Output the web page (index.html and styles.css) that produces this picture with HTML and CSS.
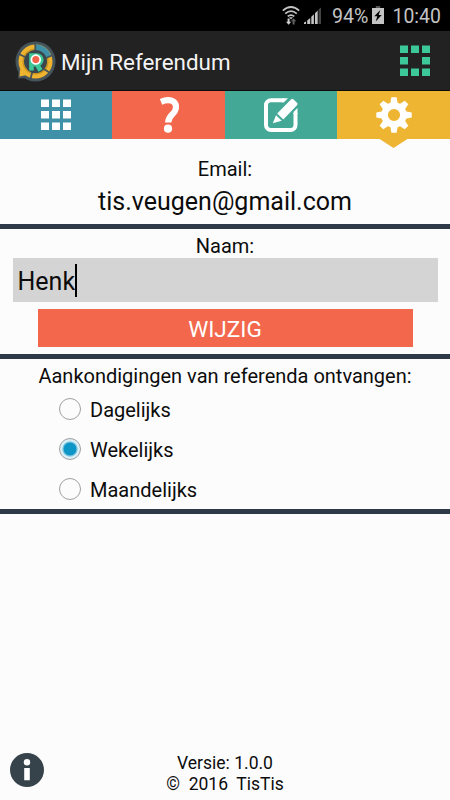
FILE: index.html
```html
<!DOCTYPE html>
<html lang="nl">
<head>
<meta charset="utf-8">
<title>Mijn Referendum</title>
<link rel="stylesheet" href="styles.css">
</head>
<body>
<div class="screen">
  <div class="status">
    <svg class="wifi" width="18" height="20" viewBox="0 0 18 20" fill="none" stroke="#c4c4c4" stroke-width="1.7">
      <path d="M.8 4.6Q9-2.6 17.2 4.6M3.2 7.6Q9 2.6 14.8 7.6M5.7 10.4Q9 7.7 12.3 10.4"/>
      <path d="M7 11.2h4L9 13.4z" fill="#c4c4c4" stroke="none"/>
      <path d="M5.6 12.5h2v3.2h1.6l-2.6 3-2.600-3h1.600z" fill="#d0d0d0" stroke="none"/>
      <path d="M10.6 18.5h2v-3.2h1.6l-2.6-3-2.6 3h1.6z" fill="#606060" stroke="none"/>
    </svg>
    <svg class="signal" width="18" height="18" viewBox="0 0 18 18">
      <path d="M0 17v-1.500l2-1V17zM3.200 17v-3.500l3-2.500v6zM7.300 17V9.800l2.600-2.600V17zM11 17V6.200l2.700-2.600V17z" fill="#c4c4c4"/>
      <path d="M14.500 17V2.600L17 .5V17z" fill="#444"/>
    </svg>
    <span class="percent">94%</span>
    <svg class="battery" width="12" height="18" viewBox="0 0 12 18">
      <path d="M3.800 0h4.400v2H3.800z" fill="#555"/>
      <path d="M0 2h12v16H0z" fill="#c4c4c4"/>
      <path d="M8.300 4L2.300 10.300h3L3.700 15.500l6-6.500h-3z" fill="#000"/>
    </svg>
    <span class="clock">10:40</span>
  </div>

  <header class="header">
    <svg class="logo" width="41" height="41" viewBox="0 0 41 41">
      <path d="M4 28L3 37.500 13 37z" fill="#46545b"/>
      <circle cx="20.500" cy="20.500" r="20" fill="#46545b"/>
      <circle cx="20.500" cy="20.500" r="14" fill="none" stroke="#eeb42f" stroke-width="6"/>
      <circle cx="20.500" cy="20.500" r="12.300" fill="none" stroke="#c99420" stroke-width="1.500"/>
      <path d="M20.500 3.500A17 17 0 0 1 36.500 15L31 17A11 11 0 0 0 20.500 9.500z" fill="#3f91a8"/>
      <path d="M5 28L4.500 35.500 12 34z" fill="#eeb42f"/>
      <path d="M20.300 2v9M31 17l7-3M10 16L3 12.500M17.500 30l-2 8M29 28l6 4" stroke="#46545b" stroke-width="1.800"/>
      <circle cx="20.500" cy="20.500" r="11.500" fill="#39464d"/>
      <path d="M16.500 29.500V14.500h5.500a4.200 4.200 0 0 1 0 8.600h-3M21.500 22.500l4 7" fill="none" stroke="#3cc898" stroke-width="4.600"/>
      <circle cx="20.800" cy="18.600" r="4.400" fill="#f0624a" stroke="#fff" stroke-width="1.700"/>
    </svg>
    <h1 class="title">Mijn Referendum</h1>
    <svg class="frame" width="30" height="32" viewBox="0 0 30 32" fill="#3cc898">
      <path d="M0 .5h8v7.500H0zM11 .5h8v7.500h-8zM22 .5h8v7.500h-8zM0 12h8v7.500H0zM22 12h8v7.500h-8zM0 23.500h8V31H0zM11 23.500h8V31h-8zM22 23.500h8V31h-8z"/>
    </svg>
  </header>

  <nav class="tabs">
    <div class="tab tab-blue">
      <svg width="30" height="32" viewBox="0 0 30 32" fill="#fff">
        <path d="M0 .5h8v7.500H0zM11 .5h8v7.500h-8zM22 .5h8v7.500h-8zM0 12h8v7.500H0zM11 12h8v7.500h-8zM22 12h8v7.500h-8zM0 23.500h8V31H0zM11 23.500h8V31h-8zM22 23.500h8V31h-8z"/>
      </svg>
    </div>
    <div class="tab tab-red">
      <svg width="20" height="36" viewBox="0 0 20 36">
        <path d="M2 4.800C9 1.800 17 2.600 17 10.400C17 17.500 9.200 17 9.200 25.500" fill="none" stroke="#fff" stroke-width="6.200"/>
        <circle cx="9" cy="31.700" r="4.100" fill="#fff"/>
      </svg>
    </div>
    <div class="tab tab-green">
      <svg width="34" height="34" viewBox="0 0 34 34">
        <path d="M20 2.300H7a5 5 0 0 0-5 5V27a5 5 0 0 0 5 5h19.500a5 5 0 0 0 5-5V15" fill="none" stroke="#fff" stroke-width="4"/>
        <path d="M13.200 15.500L27.200 1.200Q28.300.2 29.300 1.200L33.200 5Q34 6 33.200 7L19.300 21.400zM12 17.200l5.800 5.600L8.800 25.300z" fill="#fff"/>
        <path d="M18.500.300H24L20 4.300H17.500zM29.500 14l4-4v6h-4z" fill="#fff"/>
      </svg>
    </div>
    <div class="tab tab-yellow">
      <svg width="36" height="36" viewBox="-18 -18 36 36" fill="#fff">
        <defs><path id="tooth" d="M-4-10L-2.600-17.700H2.600L4-10z"/></defs>
        <use href="#tooth"/><use href="#tooth" transform="rotate(45)"/><use href="#tooth" transform="rotate(90)"/><use href="#tooth" transform="rotate(135)"/>
        <use href="#tooth" transform="rotate(180)"/><use href="#tooth" transform="rotate(225)"/><use href="#tooth" transform="rotate(270)"/><use href="#tooth" transform="rotate(315)"/>
        <circle r="9.400" fill="none" stroke="#fff" stroke-width="6.600"/>
      </svg>
    </div>
  </nav>

  <section class="email">
    <p class="label">Email:</p>
    <p class="address">tis.veugen@gmail.com</p>
  </section>

  <section class="name">
    <p class="label">Naam:</p>
    <div class="field"><span class="value">Henk</span><span class="caret"></span></div>
    <div class="button">WIJZIG</div>
  </section>

  <section class="notify">
    <p class="question">Aankondigingen van referenda ontvangen:</p>
    <div class="option"><span class="radio"></span><span class="choice">Dagelijks</span></div>
    <div class="option"><span class="radio selected"></span><span class="choice">Wekelijks</span></div>
    <div class="option"><span class="radio"></span><span class="choice">Maandelijks</span></div>
  </section>

  <footer class="footer">
    <svg class="info" width="34" height="34" viewBox="0 0 34 34">
      <circle cx="17" cy="17" r="17" fill="#36434b"/>
      <circle cx="17" cy="9.300" r="3.200" fill="#fff"/>
      <path d="M14.200 15h5.600v12.300h-5.600z" fill="#fff"/>
    </svg>
    <div class="version"><p>Versie: 1.0.0</p><p class="copy">©&nbsp; 2016&nbsp; TisTis</p></div>
  </footer>
</div>
</body>
</html>
```
FILE: styles.css
```css
* { box-sizing: border-box; }
body { margin: 0; background: #fcfcfc; font-family: Roboto, "Liberation Sans", sans-serif; color: #0c0c0c; }
p, h1 { margin: 0; font-weight: 400; white-space: nowrap; }
svg { display: block; flex: none; }
.screen { width: 450px; height: 800px; display: flex; flex-direction: column; overflow: hidden; }

.status { height: 31px; flex: none; background: #000; display: flex; padding-left: 282px; color: #c4c4c4; font-size: 19.600px; line-height: 34px; }
.wifi { margin-top: 6px; }
.signal { margin: 7px 0 0 4px; }
.percent { width: 40px; margin-left: 10px; }
.battery { margin-top: 6px; }
.clock { margin-left: 8.500px; font-size: 19.400px; }

.header { height: 60px; flex: none; background: #222; border-bottom: 1px solid #0c0c0c; display: flex; padding: 0 20px 0 15px; color: #f4f4f4; }
.logo { margin-top: 10px; }
.title { margin-left: 5px; font-size: 22.400px; line-height: 62px; }
.frame { margin: 14px 0 0 auto; }

.tabs { height: 47.500px; flex: none; display: grid; grid-template-columns: 112px 113px 112px 113px; }
.tab { display: flex; justify-content: center; align-items: center; position: relative; }
.tab-blue { background: #3f91a8; }
.tab-red { background: #f3674c; }
.tab-green { background: #43a895; }
.tab-yellow { background: #eeb533; }
.tab-yellow::after { content: ""; position: absolute; top: 47px; left: 41px; width: 31px; height: 10px; background: #eeb533; clip-path: polygon(0 0, 100% 0, 50% 100%); }

.label { font-size: 20px; line-height: 24px; text-align: center; }
.email { height: 90.500px; flex: none; padding-top: 18px; border-bottom: 5px solid #2f3a48; }
.address { font-size: 25px; line-height: 30px; margin-top: 6px; text-align: center; }

.name { height: 130px; flex: none; padding-top: 5px; border-bottom: 5px solid #2f3a48; }
.field { height: 44px; margin: 0 12.500px; padding-left: 5px; background: #d4d4d4; display: flex; align-items: center; font-size: 25px; line-height: 46px; }
.value { padding-top: 3px; }
.caret { width: 1.500px; height: 33px; background: #000; }
.button { width: 375px; height: 38px; margin: 7px auto 0; background: #f3674c; color: #fff; font-size: 22.600px; line-height: 41px; text-align: center; }

.notify { height: 154.500px; flex: none; padding-top: 5px; border-bottom: 5px solid #2f3a48; }
.question { font-size: 20px; line-height: 25px; text-align: center; }
.option { height: 40px; display: flex; align-items: center; padding-left: 59px; gap: 9px; font-size: 20px; line-height: 40px; }
.choice { padding-top: 2px; }
.radio { width: 22px; height: 22px; border: 1.500px solid #a0a0a0; border-radius: 50%; }
.selected { background: radial-gradient(circle, #0c96c8 0 6px, #7fc4dc 6.800px 7.200px, #d8eff7 8px); }

.footer { flex: 1; display: grid; grid-template-columns: 34px 1fr 34px; align-items: end; padding: 0 10px 5px; }
.info { margin-bottom: 8px; }
.version { font-size: 17.500px; line-height: 21px; text-align: center; }
```
